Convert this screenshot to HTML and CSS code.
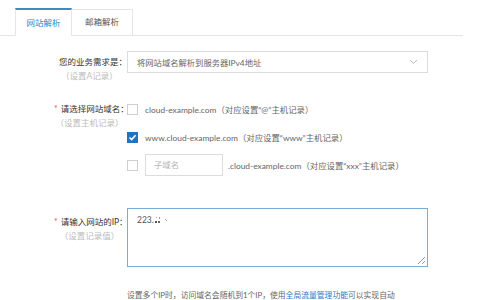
FILE: index.html
```
<!DOCTYPE html>
<html lang="zh-CN">
  <head>
    <meta charset="UTF-8" />
    <meta name="viewport" content="width=device-width, initial-scale=1.0" />
    <title>域名解析</title>
    <link rel="stylesheet" href="styles.css">
  </head>
  <body>
    <div class="page">
      <div class="tabs">
        <div class="tab active">网站解析</div>
        <div class="tab">邮箱解析</div>
      </div>

      <div class="form">
        <div class="row row-type">
          <div class="label">
            <span class="main">您的业务需求是：</span>
            <span class="sub">（设置A记录）</span>
          </div>
          <div class="select">
            <span>将网站域名解析到服务器IPv4地址</span>
            <svg class="arrow" width="9" height="6" viewBox="0 0 9 6">
              <polyline points="1,1 4.5,4.5 8,1" fill="none" stroke="#b9b9b9" stroke-width="1" />
            </svg>
          </div>
        </div>

        <div class="row row-domain">
          <div class="label">
            <span class="main"><i class="star">*</i>请选择网站域名：</span>
            <span class="sub">（设置主机记录）</span>
          </div>
          <div class="options">
            <div class="option">
              <span class="check"></span>
              <span>cloud-example.com（对应设置“@”主机记录）</span>
            </div>
            <div class="option">
              <span class="check checked">
                <svg width="11" height="11" viewBox="0 0 11 11">
                  <polyline points="2.5,5.5 4.6,7.6 8.6,3.2" fill="none" stroke="#fff" stroke-width="1.6" />
                </svg>
              </span>
              <span>www.cloud-example.com（对应设置“www”主机记录）</span>
            </div>
            <div class="option">
              <span class="check"></span>
              <span class="sub-input">子域名</span>
              <span>.cloud-example.com（对应设置“xxx”主机记录）</span>
            </div>
          </div>
        </div>

        <div class="row row-ip">
          <div class="label">
            <span class="main"><i class="star">*</i>请输入网站的IP：</span>
            <span class="sub">（设置记录值）</span>
          </div>
          <div class="textarea">
            <span>223.</span><svg class="mask" width="14" height="8" viewBox="0 0 14 8">
              <rect x="0" y="5" width="2" height="2" fill="#555" />
              <rect x="3" y="5" width="2" height="2" fill="#666" />
              <rect x="1" y="1" width="1" height="1" fill="#aaa" />
              <rect x="4" y="1" width="1" height="2" fill="#999" />
              <rect x="10" y="3" width="1" height="1" fill="#aaa" />
              <rect x="11" y="4" width="1" height="1" fill="#aaa" />
            </svg>
            <svg class="grip" width="9" height="9" viewBox="0 0 9 9">
              <line x1="1" y1="8" x2="8" y2="1" stroke="#999" />
              <line x1="5" y1="8" x2="8" y2="5" stroke="#999" />
            </svg>
          </div>
        </div>

        <p class="hint">设置多个IP时，访问域名会随机到1个IP，使用<a href="#">全局流量管理功能</a>可以实现自动</p>
      </div>
    </div>
  </body>
</html>
```

FILE: styles.css
```
* {
  box-sizing: border-box;
}
body {
  margin: 0;
  background-color: #fff;
  font-family: Lato, "Noto Sans CJK SC", sans-serif;
  font-size: 8.5px;
  color: #444;
  overflow: hidden;
}
.page {
  width: 480px;
  height: 300px;
  padding-top: 8px;
}
.tabs {
  display: flex;
  align-items: flex-end;
  width: 463px;
  height: 28px;
  padding-left: 15px;
  border-bottom: 1px solid #e4e4e4;
}
.tab {
  width: 61px;
  height: 26px;
  line-height: 25px;
  text-align: center;
  color: #555;
  background-color: #fff;
  border: 1px solid #e6e6e6;
  border-left: none;
  border-bottom: none;
}
.tab.active {
  width: 57px;
  height: 28px;
  line-height: 27px;
  color: #2f86c4;
  border-top: 2px solid #3a8fbf;
  border-left: 1px solid #e6e6e6;
  margin-bottom: -1px;
}
.form {
  padding-left: 54px;
}
.row {
  display: flex;
  align-items: flex-start;
}
.label {
  width: 73px;
  display: flex;
  flex-direction: column;
  line-height: 14px;
  padding-top: 4px;
}
.label .main {
  text-align: right;
  color: #333;
  white-space: nowrap;
}
.label .sub {
  text-align: center;
  color: #bcbcbc;
  padding-right: 2px;
}
.star {
  font-style: normal;
  color: #d9534f;
  margin-right: 3px;
}
.row-type {
  margin-top: 15px;
}
.select {
  width: 301px;
  height: 22px;
  border: 1px solid #dcdcdc;
  display: flex;
  align-items: center;
  justify-content: space-between;
  padding: 0 9px 0 9px;
  font-size: 8.3px;
  color: #666;
}
.row-domain {
  margin-top: 15px;
}
.options {
  display: flex;
  flex-direction: column;
  gap: 6px;
}
.option {
  display: flex;
  align-items: center;
  height: 22px;
  font-size: 8.4px;
  color: #666;
  white-space: nowrap;
}
.check {
  width: 11px;
  height: 11px;
  border: 1px solid #cfcfcf;
  background-color: #fff;
  margin-right: 7px;
  display: flex;
}
.check.checked {
  border-color: #1d74c4;
  background-color: #1d74c4;
}
.check.checked svg {
  margin: -1px;
}
.sub-input {
  width: 78px;
  height: 22px;
  line-height: 20px;
  border: 1px solid #dcdcdc;
  padding-left: 8px;
  color: #b5b5b5;
  margin-right: 5px;
}
.row-ip {
  margin-top: 32px;
}
.row-ip .label {
  padding-top: 7px;
}
.textarea {
  position: relative;
  width: 301px;
  height: 59px;
  border: 1px solid #79acd3;
  padding: 4px 9px;
  line-height: 14px;
  color: #555;
}
.mask {
  vertical-align: -1px;
  margin-left: 1px;
}
.grip {
  position: absolute;
  right: 1px;
  bottom: 1px;
}
.hint {
  margin: 21px 0 0 73px;
  line-height: 14px;
  font-size: 7.8px;
  color: #666;
  white-space: nowrap;
}
.hint a {
  color: #2a7cc4;
  text-decoration: none;
}
```
